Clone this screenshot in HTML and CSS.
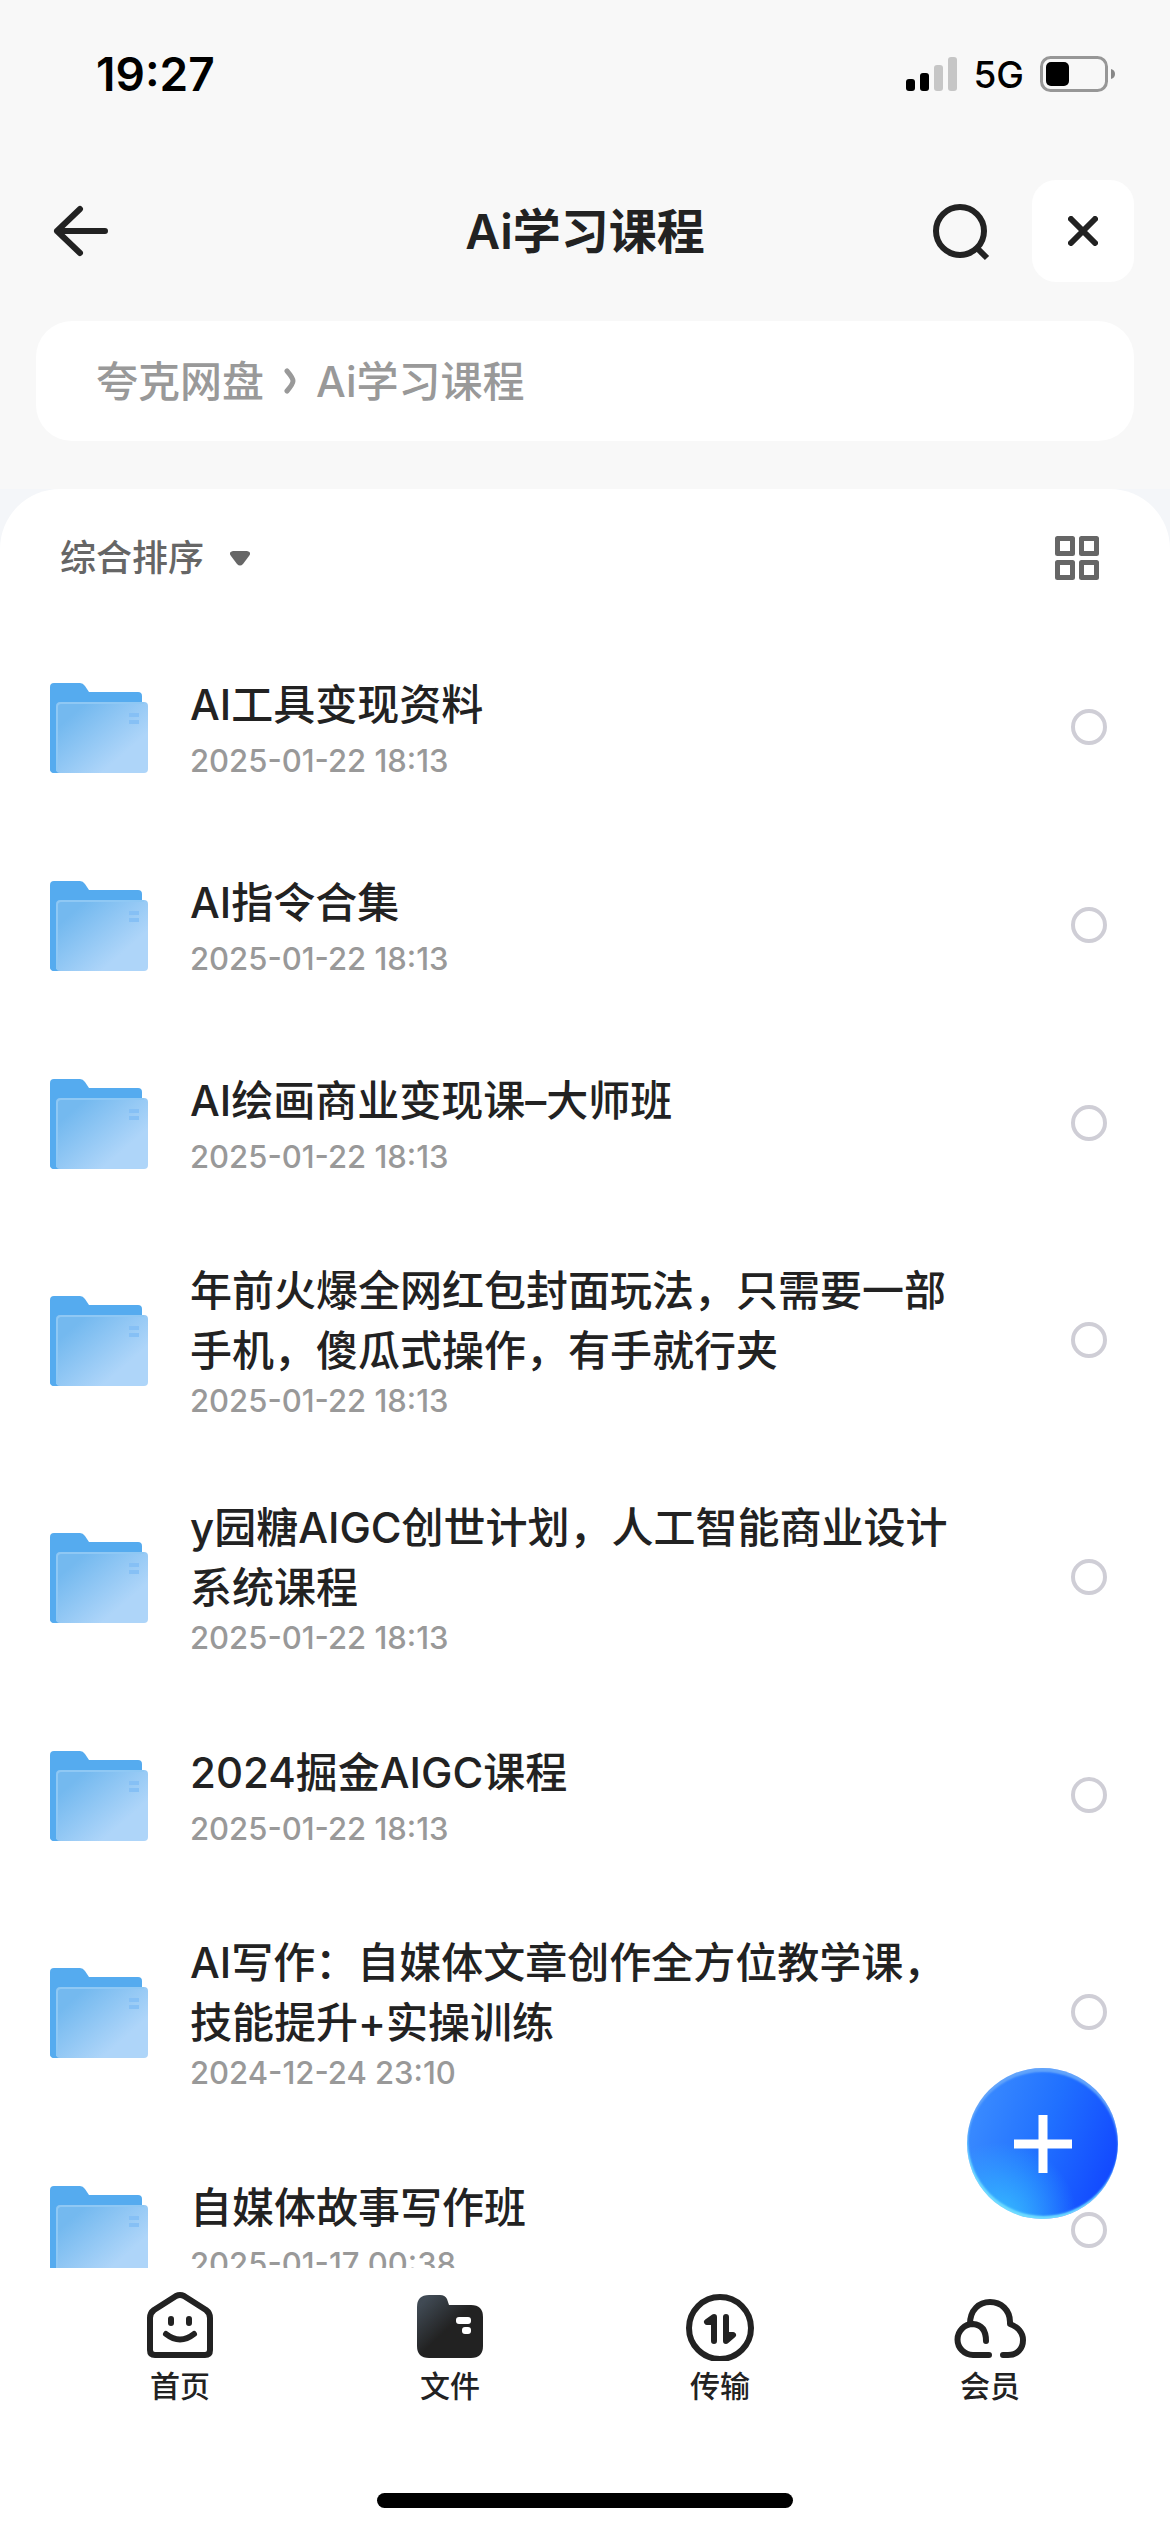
FILE: index.html
```html
<!DOCTYPE html>
<html lang="zh-CN">
  <head>
    <meta charset="UTF-8" />
    <meta name="viewport" content="width=device-width, initial-scale=1.0" />
    <title>Ai学习课程</title>
    <link rel="stylesheet" href="styles.css">
  </head>
  <body>
    <!-- 公用图标 -->
    <svg class="defs" width="0" height="0" aria-hidden="true">
      <defs>
        <linearGradient id="folder-front" x1="0" y1="0.2" x2="0.9" y2="1">
          <stop offset="0.1" stop-color="#74b9ef" />
          <stop offset="0.75" stop-color="#aed5f9" />
        </linearGradient>
        <linearGradient id="tab-dark" x1="0.1" y1="0.1" x2="0.6" y2="0.6">
          <stop offset="0" stop-color="#404a54" />
          <stop offset="0.8" stop-color="#222" />
        </linearGradient>
      </defs>
      <symbol id="folder" viewBox="0 0 98 90">
        <path d="M4 0h26q3 0 5 3l4 6h49q4 0 4 4v40H6v37H5q-5 0-5-5V4q0-4 4-4z" fill="#55abef" />
        <path d="M0 50h10v40H4q-4 0-4-4z" fill="#55abef" />
        <rect x="6" y="19" width="92" height="71" rx="4" fill="url(#folder-front)" />
        <path d="M7 88V24q0-4 4-4h83" fill="none" stroke="#8fc8f4" stroke-width="2" />
        <path d="M79 30h10v4H79zM79 37h10v4H79z" fill="#86c0f5" />
      </symbol>
    </svg>

    <div class="status-bar">
      <span class="time">19:27</span>
      <div class="status-icons">
        <svg width="51" height="34" viewBox="0 0 51 34">
          <rect x="0" y="22" width="9" height="12" rx="3" />
          <rect x="14" y="16" width="9" height="18" rx="3" />
          <rect x="28" y="8" width="9" height="26" rx="3" fill="#c6c6c6" />
          <rect x="42" y="0" width="9" height="34" rx="3" fill="#c6c6c6" />
        </svg>
        <span class="network">5G</span>
        <svg width="75" height="36" viewBox="0 0 75 36">
          <rect x="1.5" y="1.5" width="65" height="33" rx="9" fill="none" stroke="#979797" stroke-width="3" />
          <rect x="6" y="6" width="23" height="24" rx="5" />
          <path d="M71 13q4 1 4 5t-4 5z" fill="#888" />
        </svg>
      </div>
    </div>

    <header class="nav-bar">
      <button type="button" class="icon-button" aria-label="返回">
        <svg width="56" height="54" viewBox="0 0 56 54" class="stroke">
          <path d="M4 27h48M27 5 4 27l23 22" />
        </svg>
      </button>
      <h1>Ai学习课程</h1>
      <div class="nav-actions">
        <button type="button" class="icon-button" aria-label="搜索">
          <svg width="60" height="60" viewBox="0 0 60 60" class="stroke">
            <circle cx="30" cy="30" r="24" />
            <path d="M47 47l10 10" stroke-linecap="butt" />
          </svg>
        </button>
        <button type="button" class="icon-button close-button" aria-label="关闭">
          <svg width="30" height="30" viewBox="0 0 30 30" class="stroke">
            <path d="M3 3l24 24M27 3 3 27" />
          </svg>
        </button>
      </div>
    </header>

    <nav class="breadcrumb">
      <a href="#">夸克网盘</a>
      <svg width="12" height="26" viewBox="0 0 12 26">
        <path d="M3 3q6 7 6 10t-6 10" fill="none" stroke="#999" stroke-width="5" stroke-linecap="round" />
      </svg>
      <a href="#">Ai学习课程</a>
    </nav>

    <div class="sheet-wrap">
      <main class="sheet">
        <div class="toolbar">
          <button type="button" class="sort-button">
            <span>综合排序</span>
            <svg width="20" height="15" viewBox="0 0 20 15">
              <path d="M3 0h14q5 1 2 5l-6 8q-3 3-6 0L1 5q-3-4 2-5z" fill="#666" />
            </svg>
          </button>
          <button type="button" class="icon-button" aria-label="切换视图">
            <svg width="44" height="44" viewBox="0 0 44 44">
              <g fill="none" stroke="#666" stroke-width="5" stroke-linejoin="round">
                <rect x="2.5" y="2.5" width="15" height="15" />
                <rect x="26.5" y="2.5" width="15" height="15" />
                <rect x="2.5" y="26.5" width="15" height="15" />
                <rect x="26.5" y="26.5" width="15" height="15" />
              </g>
            </svg>
          </button>
        </div>

        <ul class="file-list">
          <li class="file">
            <svg class="folder"><use href="#folder" /></svg>
            <label class="info" for="file-1">
              <span class="name">AI工具变现资料</span>
              <span class="date">2025-01-22 18:13</span>
            </label>
            <input type="checkbox" id="file-1" />
          </li>
          <li class="file">
            <svg class="folder"><use href="#folder" /></svg>
            <label class="info" for="file-2">
              <span class="name">AI指令合集</span>
              <span class="date">2025-01-22 18:13</span>
            </label>
            <input type="checkbox" id="file-2" />
          </li>
          <li class="file">
            <svg class="folder"><use href="#folder" /></svg>
            <label class="info" for="file-3">
              <span class="name">AI绘画商业变现课–大师班</span>
              <span class="date">2025-01-22 18:13</span>
            </label>
            <input type="checkbox" id="file-3" />
          </li>
          <li class="file">
            <svg class="folder"><use href="#folder" /></svg>
            <label class="info" for="file-4">
              <span class="name">年前火爆全网红包封面玩法，只需要一部手机，傻瓜式操作，有手就行夹</span>
              <span class="date">2025-01-22 18:13</span>
            </label>
            <input type="checkbox" id="file-4" />
          </li>
          <li class="file">
            <svg class="folder"><use href="#folder" /></svg>
            <label class="info" for="file-5">
              <span class="name">y园糖AIGC创世计划，人工智能商业设计系统课程</span>
              <span class="date">2025-01-22 18:13</span>
            </label>
            <input type="checkbox" id="file-5" />
          </li>
          <li class="file">
            <svg class="folder"><use href="#folder" /></svg>
            <label class="info" for="file-6">
              <span class="name">2024掘金AIGC课程</span>
              <span class="date">2025-01-22 18:13</span>
            </label>
            <input type="checkbox" id="file-6" />
          </li>
          <li class="file">
            <svg class="folder"><use href="#folder" /></svg>
            <label class="info" for="file-7">
              <span class="name">AI写作：自媒体文章创作全方位教学课，技能提升+实操训练</span>
              <span class="date">2024-12-24 23:10</span>
            </label>
            <input type="checkbox" id="file-7" />
          </li>
          <li class="file">
            <svg class="folder"><use href="#folder" /></svg>
            <label class="info" for="file-8">
              <span class="name">自媒体故事写作班</span>
              <span class="date">2025-01-17 00:38</span>
            </label>
            <input type="checkbox" id="file-8" />
          </li>
        </ul>
      </main>

      <button type="button" class="add-button" aria-label="新建">
        <svg width="58" height="58" viewBox="0 0 58 58">
          <path d="M29 0v58M0 29h58" stroke="#fff" stroke-width="9" />
        </svg>
      </button>
    </div>

    <footer>
      <nav class="tab-bar">
        <a href="#">
          <svg width="72" height="72" viewBox="0 0 72 72" class="stroke">
            <path d="M6 29q0-5 4-8L32 7q4-2 8 0l22 14q4 3 4 8v32q0 5-5 5H11q-5 0-5-5z" />
            <path d="M27 30v4M45 30v4M22 45q14 11 28 0" />
          </svg>
          首页
        </a>
        <a href="#">
          <svg width="72" height="72" viewBox="0 0 72 72">
            <path d="M3 18Q3 6 15 6h11q5 0 7 4l2 6h22q12 0 12 12v29q0 12-12 12H15Q3 69 3 57z" fill="url(#tab-dark)" />
            <rect x="42" y="28" width="15" height="7" rx="3" fill="#fff" />
            <rect x="48" y="38" width="9" height="7" rx="3" fill="#fff" />
          </svg>
          文件
        </a>
        <a href="#">
          <svg width="72" height="72" viewBox="0 0 72 72" class="stroke">
            <circle cx="36" cy="39" r="31" />
            <path d="M30 52V28l-7 5h7M42 28v24l7-6h-7" fill="#222" />
          </svg>
          传输
        </a>
        <a href="#">
          <svg width="72" height="72" viewBox="0 0 72 72" class="stroke">
            <path d="M35 66H19A15 15 0 0 1 19 35q13 1 13 17" />
            <path d="M16 35C16 21 25 13 36 13s20 8 20 20v2c8 3 13 9 13 16 0 9-6 15-15 15h-5" />
          </svg>
          会员
        </a>
      </nav>
      <div class="home-indicator"></div>
    </footer>
  </body>
</html>
```
FILE: styles.css
```css
* {
  box-sizing: border-box;
}

body {
  display: flex;
  flex-direction: column;
  height: 100vh;
  margin: 0;
  font-family: Inter, "Noto Sans CJK SC", sans-serif;
  background-color: #f8f8f8;
  color: #222;
}

a {
  color: inherit;
  text-decoration: none;
}

button {
  padding: 0;
  border: none;
  background: none;
  font-family: inherit;
  color: inherit;
  cursor: pointer;
}

svg {
  display: block;
  flex-shrink: 0;
}

.defs {
  position: absolute;
}

.stroke {
  fill: none;
  stroke: #222;
  stroke-width: 6;
  stroke-linecap: round;
  stroke-linejoin: round;
}

/* 状态栏 */
.status-bar {
  display: flex;
  justify-content: space-between;
  align-items: center;
  height: 148px;
  padding: 0 55px 0 96px;
  color: #000;
}

.time {
  font-size: 46px;
  font-weight: 600;
}

.status-icons {
  display: flex;
  align-items: center;
  gap: 16px;
}

.network {
  font-size: 37px;
  font-weight: 500;
}

/* 顶部导航 */
.nav-bar {
  display: grid;
  grid-template-columns: 1fr auto 1fr;
  align-items: center;
  height: 102px;
  margin: 32px 36px 0;
}

.nav-bar h1 {
  margin: 0;
  padding-bottom: 6px;
  font-size: 48px;
  font-weight: 600;
}

.icon-button {
  display: flex;
  justify-content: center;
  align-items: center;
}

.nav-bar > .icon-button {
  justify-self: start;
  margin-left: 17px;
}

.nav-actions {
  display: flex;
  justify-content: flex-end;
  align-items: center;
  gap: 42px;
}

.close-button {
  width: 102px;
  height: 102px;
  border-radius: 24px;
  background-color: #fff;
}

/* 路径 */
.breadcrumb {
  display: flex;
  align-items: center;
  gap: 20px;
  height: 120px;
  margin: 39px 36px 48px;
  padding: 0 60px;
  border-radius: 36px;
  background-color: #fff;
  font-size: 42px;
  font-weight: 500;
  color: #999;
}

.breadcrumb a {
  padding-bottom: 6px;
}

/* 文件列表 */
.sheet-wrap {
  position: relative;
  flex: 1;
  min-height: 0;
  background-color: #f4f6f9;
}

.sheet {
  height: 100%;
  overflow: hidden;
  border-radius: 60px 60px 0 0;
  background-color: #fff;
}

.toolbar {
  display: flex;
  justify-content: space-between;
  align-items: center;
  height: 138px;
  padding: 0 71px 0 60px;
}

.sort-button {
  display: flex;
  align-items: center;
  gap: 26px;
  font-size: 36px;
  font-weight: 500;
  color: #666;
}

.sort-button span {
  padding-bottom: 6px;
}

.file-list {
  margin: 0;
  padding: 0;
  list-style: none;
}

.file {
  display: flex;
  align-items: center;
  min-height: 198px;
  padding: 38px 63px 37px 50px;
}

.folder {
  width: 98px;
  height: 90px;
  margin-top: 2px;
  margin-right: 42px;
}

.info {
  flex: 1;
  display: flex;
  flex-direction: column;
  padding-top: 2px;
}

.name {
  max-width: 770px;
  min-height: 66px;
  font-size: 42px;
  line-height: 60px;
  font-weight: 500;
}

.date {
  font-size: 31px;
  line-height: 40px;
  font-weight: 500;
  color: #999;
}

.file input {
  appearance: none;
  width: 36px;
  height: 36px;
  margin: 0;
  border: 4px solid #cfced6;
  border-radius: 50%;
  background-color: #fff;
}

.file input:checked {
  background-color: #1a66ff;
}

.add-button {
  position: absolute;
  right: 52px;
  bottom: 49px;
  display: flex;
  justify-content: center;
  align-items: center;
  width: 151px;
  height: 151px;
  border-radius: 50%;
  background: radial-gradient(circle at 22% 100%, #37bcff 0, rgba(45, 150, 255, 0) 40%),
    linear-gradient(110deg, #3a8bff 10%, #2070ff 50%, #1248ff 90%);
  box-shadow: inset 0 4px 2px #62a4fb, inset 1px -3px 2px #6fdcff;
}

/* 底部标签栏 */
footer {
  height: 264px;
  background-color: #fff;
}

.tab-bar {
  display: flex;
  padding: 21px 45px 0;
}

.tab-bar a {
  flex: 1;
  display: flex;
  flex-direction: column;
  align-items: center;
  gap: 3px;
  font-size: 30px;
  line-height: 44px;
  font-weight: 500;
}

.home-indicator {
  width: 416px;
  height: 15px;
  margin: 85px auto 0;
  border-radius: 8px;
  background-color: #000;
}
```
